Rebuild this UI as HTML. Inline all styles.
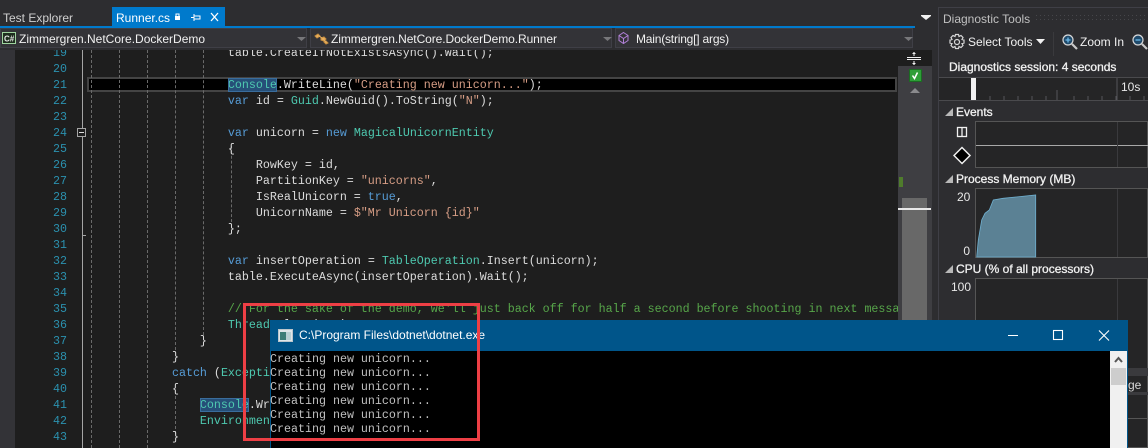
<!DOCTYPE html>
<html><head><meta charset="utf-8"><style>
html,body{margin:0;padding:0;background:#2d2d30;width:1148px;height:448px;overflow:hidden}
#r{position:absolute;left:0;top:0;width:1148px;height:448px;overflow:hidden}
.a{position:absolute;white-space:pre}
body{font-family:"Liberation Sans",sans-serif;font-size:12px;color:#f1f1f1}
pre{margin:0;font-family:"Liberation Mono",monospace;font-size:11.67px;line-height:16px;color:#dcdcdc}
.k{color:#569cd6}.t{color:#4ec9b0}.s{color:#d69d85}.c{color:#57a64a}.h{background:#264f78;outline:1px solid #3a6d9c;outline-offset:-1px}
.ln{color:#2b91af;text-align:right}
.combo{position:absolute;top:28px;height:20px;background:#333337;border:1px solid #3f3f46;box-sizing:border-box}
.dt{position:absolute;width:0;border-left:1px dashed #6a6a6a}
.g{position:absolute;background:#252526;border:1px solid #555;box-sizing:border-box}
.b{color:#f1f1f1;font-size:12px;-webkit-text-stroke:.3px #f1f1f1}
</style></head><body><div id="r">
<div class="a" style="left:3px;top:11px;color:#d0d0d0;font-size:12px">Test Explorer</div>
<div class="a" style="left:112px;top:7px;width:113px;height:19px;background:#007acc"></div>
<div class="a" style="left:116px;top:11px;color:#fff;font-size:12px">Runner.cs</div>
<svg class="a" style="left:170px;top:10px" width="56" height="16" viewBox="0 0 56 16" fill="none" stroke="#fff">
<rect x="5" y="6" width="5" height="4" fill="#fff" stroke="none"/><path d="M6 6V4h3v2"/>
<path d="M24 4v7M24 6h6v3h-6M21 7.500h3"/>
<path d="M41 3l7 8M48 3l-7 8" stroke-width="1.300"/></svg>
<div class="a" style="left:0;top:26px;width:915px;height:2px;background:#007acc"></div>
<svg class="a" style="left:920px;top:14px" width="14" height="8"><path d="M1 1h10v1l-5 4-5-4z" fill="#f1f1f1"/></svg>

<div class="a" style="left:0;top:50px;width:898px;height:398px;background:#1e1e1e;overflow:hidden">
<div class="a" style="left:0;top:0;width:15px;height:398px;background:#333337"></div>
<div class="a" style="left:87px;top:27px;width:806px;height:11px;background:#000;border:2px solid #444"></div>
<div class="a" style="left:82px;top:0;width:1px;height:398px;background:#a5a5a5"></div>
<div class="a" style="left:82px;top:185px;width:4px;height:1px;background:#a5a5a5"></div>
<div class="a" style="left:77px;top:78px;width:7px;height:7px;border:1px solid #a5a5a5;background:#1e1e1e"></div>
<div class="a" style="left:79px;top:82px;width:5px;height:1px;background:#ddd"></div>
<div class="dt" style="left:91px;top:0;height:398px"></div>
<div class="dt" style="left:119px;top:0;height:398px"></div>
<div class="dt" style="left:147px;top:0;height:398px"></div>
<div class="dt" style="left:175px;top:0;height:300px"></div>
<div class="dt" style="left:175px;top:346px;height:38px"></div>
<div class="dt" style="left:203px;top:0;height:285px"></div>
<div class="dt" style="left:231px;top:96px;height:76px"></div>
<pre class="a ln" style="left:30px;top:-5px;width:37px">19
20
21
22
23
24
25
26
27
28
29
30
31
32
33
34
35
36
37
38
39
40
41
42
43</pre>
<pre class="a" style="left:88px;top:-5px">                    table.CreateIfNotExistsAsync().Wait();

                    <span class="t h">Console</span>.WriteLine(<span class="s">"Creating new unicorn..."</span>);
                    <span class="k">var</span> id = <span class="t">Guid</span>.NewGuid().ToString(<span class="s">"N"</span>);

                    <span class="k">var</span> unicorn = <span class="k">new</span> <span class="t">MagicalUnicornEntity</span>
                    {
                        RowKey = id,
                        PartitionKey = <span class="s">"unicorns"</span>,
                        IsRealUnicorn = <span class="k">true</span>,
                        UnicornName = <span class="s">$"Mr Unicorn {id}"</span>
                    };

                    <span class="k">var</span> insertOperation = <span class="t">TableOperation</span>.Insert(unicorn);
                    table.ExecuteAsync(insertOperation).Wait();

                    <span class="c">// For the sake of the demo, we'll just back off for half a second before shooting in next messa</span>
                    <span class="t">Thread</span>.Sleep(500);
                }
            }
            <span class="k">catch</span> (<span class="t">Exception</span> e)
            {
                <span class="t h">Console</span>.WriteLine(e);
                <span class="t">Environment</span>.Exit(1);
            }</pre>
</div>

<div class="a" style="left:0;top:28px;width:915px;height:22px;background:#2d2d30"></div>
<div class="combo" style="left:0;width:307px"></div>
<div class="combo" style="left:310px;width:302px"></div>
<div class="combo" style="left:615px;width:298px"></div>
<svg class="a" style="left:2px;top:31px" width="14" height="14"><rect x=".5" y="1.500" width="13" height="11" fill="#1e2e1e" stroke="#9fd49f"/><text x="2" y="10.500" font-family="Liberation Sans" font-size="8" font-weight="bold" fill="#e8e8e8">C#</text></svg>
<div class="a" style="left:19px;top:32px;color:#f1f1f1">Zimmergren.NetCore.DockerDemo</div>
<svg class="a" style="left:314px;top:30px" width="16" height="16"><path d="M1 6l3-2 2 2-3 2zM7 8l3-1 2 2-2 2-3-1zM10 12l2-1 2 2-2 1z" fill="#e8b060" stroke="#c89040"/><path d="M5 6l3 2M10 10l2 2" stroke="#e8b060"/></svg>
<div class="a" style="left:331px;top:32px;color:#f1f1f1;letter-spacing:-.08px">Zimmergren.NetCore.DockerDemo.Runner</div>
<svg class="a" style="left:617px;top:31px" width="13" height="14" fill="none" stroke="#b180d7"><path d="M6.500 1.500l4.500 3v5l-4.500 3-4.500-3v-5z"/><path d="M2 4.500l4.500 3 4.500-3M6.500 7.500v5"/></svg>
<div class="a" style="left:636px;top:32px;color:#f1f1f1;letter-spacing:-.2px">Main(string[] args)</div>
<svg class="a" style="left:0;top:35px" width="915" height="8" fill="#77777a"><path d="M297 2h9l-4.500 4zM603 2h9l-4.500 4zM904 2h9l-4.500 4z"/></svg>

<div class="a" style="left:898px;top:50px;width:34px;height:398px;background:#3e3e42"></div>
<div class="a" style="left:898px;top:50px;width:34px;height:16px;background:#1e1e1e"></div>
<svg class="a" style="left:906px;top:51px" width="16" height="15" stroke="#f1f1f1" fill="#f1f1f1"><path d="M1 6.500h14M1 8.500h14" fill="none"/><path d="M8 1v4M8 10v4" fill="none"/><path d="M6 3l2-2 2 2zM6 12l2 2 2-2z" stroke="none"/></svg>
<div class="a" style="left:909px;top:69px;width:11px;height:11px;background:#2e9e38;border:1px solid #1b6b22"></div>
<svg class="a" style="left:909px;top:69px" width="13" height="13" fill="none" stroke="#fff" stroke-width="1.500"><path d="M3.500 6.500l2 3 3-6"/></svg>
<svg class="a" style="left:908px;top:86px" width="14" height="8"><path d="M1 7l5-5 5 5z" fill="#8a8a8d" transform="translate(1 0)"/></svg>
<div class="a" style="left:899px;top:177px;width:4px;height:10px;background:#4f7c2c"></div>
<div class="a" style="left:902px;top:198px;width:25px;height:122px;background:#686868"></div>
<div class="a" style="left:898px;top:208px;width:33px;height:2px;background:#e8e8e8"></div>
<div class="a" style="left:938px;top:7px;width:1px;height:441px;background:#3f3f46"></div>
<div class="a" style="left:939px;top:7px;width:209px;height:1px;background:#3f3f46"></div>

<div class="a" style="left:943px;top:12px;color:#c0c0c0;font-size:12px">Diagnostic Tools</div>
<svg class="a" style="left:1036px;top:15px" width="112" height="7"><defs><pattern id="p" width="4" height="4" patternUnits="userSpaceOnUse"><rect width="1" height="1" fill="#46464a"/></pattern></defs><rect width="112" height="7" fill="url(#p)"/></svg>
<svg class="a" style="left:948px;top:33px" width="18" height="18" fill="none" stroke="#d8d8d8" stroke-width="1.200"><circle cx="9" cy="9" r="2.500"/><path d="M7.500 1.500h3l.5 2 2-1 2 2-1 2 2 .5v3l-2 .5 1 2-2 2-2-1-.5 2h-3l-.5-2-2 1-2-2 1-2-2-.5v-3l2-.5-1-2 2-2 2 1z"/></svg>
<div class="a" style="left:968px;top:35px;color:#f1f1f1">Select Tools</div>
<svg class="a" style="left:1036px;top:39px" width="10" height="6"><path d="M0 0h9l-4.500 5z" fill="#f1f1f1"/></svg>
<div class="a" style="left:1053px;top:32px;width:1px;height:24px;background:#3a3a3d"></div>
<svg class="a" style="left:1061px;top:33px" width="18" height="18"><circle cx="7" cy="7" r="5" fill="#1f4a6b" stroke="#d8d8d8" stroke-width="1.200"/><path d="M4.500 7h5M7 4.500v5" stroke="#6cb8e8" stroke-width="1.300"/><path d="M11 11l5 5" stroke="#c8c8c8" stroke-width="2.200"/></svg>
<div class="a" style="left:1080px;top:35px;color:#f1f1f1">Zoom In</div>
<svg class="a" style="left:1131px;top:33px" width="17" height="18"><circle cx="7" cy="7" r="5" fill="#1f4a6b" stroke="#d8d8d8" stroke-width="1.200"/><path d="M4.500 7h5" stroke="#6cb8e8" stroke-width="1.300"/><path d="M11 11l5 5" stroke="#c8c8c8" stroke-width="2.200"/></svg>
<div class="a b" style="left:949px;top:60px">Diagnostics session: 4 seconds</div>

<div class="a" style="left:939px;top:77px;width:209px;height:24px;background:#252526;border-top:1px solid #4a4a4d;border-bottom:1px solid #4a4a4d;box-sizing:border-box"></div>
<div class="a" style="left:971px;top:78px;width:5px;height:22px;background:#f1f1f1"></div>
<svg class="a" style="left:939px;top:78px" width="209" height="22" stroke="#55555a"><path d="M51 18v4M65 18v4M79 18v4M93 18v4M107 18v4M118 12v10M135 18v4M149 18v4M163 18v4M177 18v4M191 18v4M205 18v4M178 0v22"/></svg>
<div class="a" style="left:1121px;top:80px;color:#e8e8e8">10s</div>

<svg class="a" style="left:945px;top:107px" width="10" height="10"><path d="M8 1v8H0z" fill="#b8b8b8"/></svg>
<div class="a b" style="left:956px;top:105px">Events</div>
<div class="g" style="left:975px;top:121px;width:173px;height:47px"></div>
<div class="a" style="left:976px;top:145px;width:172px;height:1px;background:#a8a8a8"></div>
<div class="a" style="left:1117px;top:122px;width:1px;height:45px;background:#3a3a3d"></div>
<svg class="a" style="left:953px;top:124px" width="20" height="44" fill="none" stroke="#f1f1f1"><rect x="4.500" y="3.500" width="9" height="9" stroke-width="1.300"/><path d="M9 3.500v9" stroke-width="1.300"/><path d="M1 32l8-8 8 8-8 8z" fill="#000" stroke-width="1.500" transform="translate(0 -.500)"/></svg>

<svg class="a" style="left:945px;top:174px" width="10" height="10"><path d="M8 1v8H0z" fill="#b8b8b8"/></svg>
<div class="a b" style="left:956px;top:172px">Process Memory (MB)</div>
<div class="g" style="left:975px;top:188px;width:173px;height:70px"></div>
<div class="a" style="left:1117px;top:189px;width:1px;height:68px;background:#3a3a3d"></div>
<svg class="a" style="left:0;top:0" width="1148" height="448"><polygon points="976.700,257 978.300,240 981.700,220 985,213.300 989.300,210 993.300,200 1003,198.300 1035.700,195 1035.700,257" fill="#5b8194" stroke="#6fb0d0" stroke-width=".8"/></svg>
<div class="a" style="left:957px;top:190px;width:13px;text-align:right;color:#e8e8e8">20</div>
<div class="a" style="left:957px;top:244px;width:13px;text-align:right;color:#e8e8e8">0</div>

<svg class="a" style="left:945px;top:264px" width="10" height="10"><path d="M8 1v8H0z" fill="#b8b8b8"/></svg>
<div class="a b" style="left:956px;top:262px">CPU (% of all processors)</div>
<div class="g" style="left:975px;top:278px;width:173px;height:170px"></div>
<div class="a" style="left:1117px;top:279px;width:1px;height:169px;background:#3a3a3d"></div>
<div class="a" style="left:951px;top:280px;width:19px;text-align:right;color:#e8e8e8">100</div>
<div class="a" style="left:1127px;top:368px;width:21px;height:8px;background:#3a3a3d"></div>
<div class="a" style="left:1127px;top:392px;width:21px;height:3px;background:#3a3a3d"></div>
<div class="a" style="left:1127px;top:418px;width:21px;height:1px;background:#555"></div>
<div class="a" style="left:1128px;top:378px;color:#d8d8d8">ge</div>

<div class="a" style="left:270px;top:320px;width:857px;height:128px;background:#000"></div>
<div class="a" style="left:270px;top:320px;width:857px;height:31px;background:#00558a"></div>
<div class="a" style="left:270px;top:351px;width:1px;height:97px;background:#00558a"></div>
<div class="a" style="left:1127px;top:320px;width:1px;height:128px;background:#00558a"></div>
<svg class="a" style="left:278px;top:329px" width="16" height="14"><rect x=".5" y=".5" width="14" height="12" fill="#dfe6ea" stroke="#bcc6cc"/><rect x="2" y="3" width="6" height="8" fill="#3d7d78"/><rect x="8" y="3" width="5" height="8" fill="#b9d0d4"/></svg>
<div class="a" style="left:299px;top:328px;color:#fff;font-size:12px">C:\Program Files\dotnet\dotnet.exe</div>
<svg class="a" style="left:1000px;top:320px" width="127" height="31" fill="none" stroke="#fff"><path d="M8 15.500h10"/><rect x="53.500" y="10.500" width="9" height="9" stroke-width="1.100"/><path d="M99 10.500l10 10M109 10.500l-10 10" stroke-width="1.100"/></svg>
<pre class="a" style="left:270px;top:352px;line-height:14px;color:#c0c0c0">Creating new unicorn...
Creating new unicorn...
Creating new unicorn...
Creating new unicorn...
Creating new unicorn...
Creating new unicorn...</pre>
<div class="a" style="left:1110px;top:351px;width:17px;height:97px;background:#f0f0f0"></div>
<svg class="a" style="left:1110px;top:351px" width="17" height="17" fill="none" stroke="#555" stroke-width="2"><path d="M5 11l3.500-4 3.500 4"/></svg>
<div class="a" style="left:1111px;top:368px;width:15px;height:17px;background:#cdcdcd"></div>

<div class="a" style="left:243px;top:303px;width:231px;height:132px;border:3px solid #ee3f45"></div>
</div></body></html>
